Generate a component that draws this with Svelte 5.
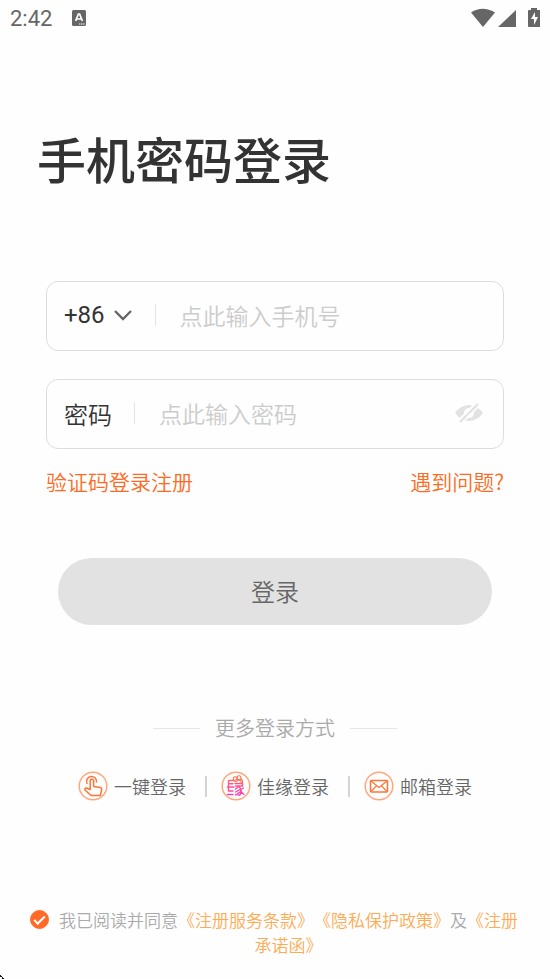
<script>
  let phone = $state('');
  let password = $state('');
  let agreed = $state(true);
</script>

<div class="screen">
  <header class="status">
    <span class="time">2:42</span>
    <svg class="app" width="14" height="16" viewBox="0 0 14 16" aria-hidden="true">
      <rect width="14" height="16" rx="1.5" fill="#666" />
      <path d="M3.600 11 6.400 4h1.200l2.800 7M5 9h4" fill="none" stroke="#fff" stroke-width="1.700" />
      <path d="M7 14h6" stroke="#fff" stroke-width="1" stroke-dasharray="1.4 .7" />
    </svg>
    <svg class="signals" width="70" height="20" viewBox="0 0 70 20" aria-hidden="true">
      <path d="M1 4.5Q12.5-3 25 4.5L13 19Z" fill="#666" />
      <path d="M46 2v17H28Z" fill="#666" />
      <path d="M61 0h6v2h3v17H59q-1 0-1-1V3q0-1 1-1h2Z" fill="#666" />
      <path d="M65 4l-4 7h3v6l4-8h-3Z" fill="#fff" />
    </svg>
  </header>

  <main>
    <h1>手机密码登录</h1>

    <form onsubmit={(e) => e.preventDefault()}>
      <div class="field">
        <button type="button" class="code" aria-label="+86">
          +86
          <svg width="20" height="12" viewBox="0 0 20 12" aria-hidden="true">
            <path d="M2 2l8 8 8-8" fill="none" stroke="#666" stroke-width="2.4" />
          </svg>
        </button>
        <span class="bar"></span>
        <input type="tel" aria-label="手机号" placeholder="点此输入手机号" bind:value={phone} />
      </div>

      <div class="field">
        <label for="password">密码</label>
        <span class="bar"></span>
        <input id="password" type="password" placeholder="点此输入密码" bind:value={password} />
        <button type="button" class="eye" aria-label="显示密码">
          <svg width="28" height="20" viewBox="0 0 28 20" aria-hidden="true">
            <path d="M0 10Q6 2 14 2t14 8q-6 8-14 8T0 10Z" fill="#e2e2e2" />
            <circle cx="14" cy="10" r="5" fill="#fff" />
            <path d="M14 7a3 3 0 0 1 3 3" fill="none" stroke="#e2e2e2" stroke-width="1.5" />
            <path d="M3 18 21 0" stroke="#fff" stroke-width="2" />
            <path d="M5 19 23 1" stroke="#e2e2e2" stroke-width="2" />
            <path d="M7 20 25 2" stroke="#fff" stroke-width="1.4" />
          </svg>
        </button>
      </div>

      <div class="links">
        <a href="#register">验证码登录注册</a>
        <a href="#help">遇到问题?</a>
      </div>

      <button type="submit" class="submit">登录</button>
    </form>

    <section class="more">
      <h2>更多登录方式</h2>
      <div class="methods">
        <button type="button">
          <svg width="30" height="30" viewBox="0 0 30 30" aria-hidden="true">
            <circle cx="15" cy="15" r="13.8" fill="none" stroke="#ffa77d" stroke-width="1.5" />
            <g fill="none" stroke="#ff7434" stroke-width="1.5" stroke-linejoin="round" stroke-linecap="round">
              <path d="M9 12.500a5 5 0 1 1 9.500-1.500" />
              <path d="M12.200 18.500V10a1.700 1.700 0 0 1 3.400 0v5.500l6.900 1q1.500.5 1.200 2.300L22.300 24.500H13l-6-5.500q-.8-2 1.500-2Z" />
            </g>
          </svg>
          一键登录
        </button>
        <span class="rule"></span>
        <button type="button">
          <svg width="30" height="30" viewBox="0 0 30 30" aria-hidden="true">
            <defs>
              <linearGradient id="knot" gradientUnits="userSpaceOnUse" x1="0" y1="5" x2="0" y2="24">
                <stop offset="0" stop-color="#ff7a45" />
                <stop offset=".35" stop-color="#fb5a83" />
                <stop offset="1" stop-color="#f83fb4" />
              </linearGradient>
            </defs>
            <circle cx="15" cy="15" r="13.8" fill="none" stroke="#ffa77d" stroke-width="1.5" />
            <g fill="none" stroke="url(#knot)" stroke-width="1.4" stroke-linecap="round" stroke-linejoin="round">
              <path d="M12.500 9.500H7.500v6.500M7.500 12.700h4.500M6.500 16h6.500M7.500 16.500v3.500h4.500M6.500 23.500h5.500" />
              <path d="M14 12.500h7.500V15H14.500M14.500 18l3.500-2.500q3.500 4 1 8.500h-2M14.500 21l4.500-2.500M14.500 24l4.500-3M20 18.500l2.500-1.500M19.500 19q1 3 3.500 4.500" />
            </g>
            <g fill="none" stroke="#ff6f4d" stroke-width="1.100">
              <circle cx="14" cy="7.500" r="1.800" />
              <circle cx="18" cy="6.800" r="2" />
              <path d="M13 9.500q2 2 4-.5 2.500-.5 3.500 2.500M20 8q2 1 1.500 4" />
            </g>
          </svg>
          佳缘登录
        </button>
        <span class="rule"></span>
        <button type="button">
          <svg width="30" height="30" viewBox="0 0 30 30" aria-hidden="true">
            <circle cx="15" cy="15" r="13.8" fill="none" stroke="#ffa77d" stroke-width="1.5" />
            <g fill="none" stroke="#ff7434" stroke-width="1.5" stroke-linejoin="round">
              <rect x="6.500" y="9.500" width="17" height="11.500" rx="1" />
              <path d="M7 10l8 6.500L23 10M7 20.500l5.500-5.700M23 20.500l-5.500-5.700" stroke-width="1.2" />
            </g>
          </svg>
          邮箱登录
        </button>
      </div>
    </section>
  </main>

  <footer>
    <input id="agree" type="checkbox" bind:checked={agreed} />
    <p>
      <label for="agree">我已阅读并同意</label><a href="#terms">《注册服务条款》</a><a href="#privacy">《隐私保护政策》</a>及<a href="#promise">《注册承诺函》</a>
    </p>
  </footer>

  <svg class="corner" width="4" height="4" viewBox="0 0 4 4" aria-hidden="true">
    <path d="M0 0h1v1h1v1H0ZM2 2h1v1h1v1H2Z" fill="#111" />
  </svg>
</div>

<style>
  :global(body) { background: #fefefe; }
  .screen {
    position: relative;
    box-sizing: border-box;
    min-height: 100vh;
    display: flex;
    flex-direction: column;
    color: #333;
    font-family: "Noto Sans CJK SC", sans-serif;
    font-weight: 350;
    text-spacing-trim: space-all;
  }
  button, input {
    font: inherit;
    color: inherit;
    background: none;
    border: 0;
    margin: 0;
    padding: 0;
  }
  button { cursor: pointer; }
  a { text-decoration: none; }
  svg { display: block; flex: none; }
  .status {
    display: flex;
    align-items: center;
    height: 36px;
    padding: 0 10px;
  }
  .time {
    padding-top: 2px;
    font: 400 22px/36px Roboto, sans-serif;
    color: #666;
  }
  .app { margin-left: 20px; }
  .signals { margin-left: auto; }
  h1 {
    margin: 86px 37px 0;
    font-size: 49px;
    font-weight: 500;
    line-height: 72px;
  }
  form { margin: 87px 46px 0; }
  .field {
    display: flex;
    align-items: center;
    box-sizing: border-box;
    height: 70px;
    margin-bottom: 28px;
    padding: 0 20px 2px 17px;
    border: 1px solid #ddd;
    border-radius: 12px;
    font-size: 24px;
  }
  .code {
    display: flex;
    align-items: center;
    gap: 8px;
    font-family: Roboto, sans-serif;
    font-weight: 400;
  }
  .bar {
    flex: none;
    width: 1px;
    height: 22px;
    margin: 0 24px 0 22px;
    background: #e4e4e4;
  }
  .field input {
    flex: 1;
    min-width: 0;
    height: 60px;
    font-size: 23px;
    outline: 0;
  }
  .field input::placeholder { color: #ccc; opacity: 1; }
  .links {
    display: flex;
    justify-content: space-between;
    margin-top: -12px;
    font-size: 21px;
    line-height: 32px;
  }
  .links a { color: #ff6a22; }
  .submit {
    display: block;
    width: calc(100% - 24px);
    height: 67px;
    margin: 61px 12px 0;
    padding-bottom: 2px;
    border-radius: 34px;
    background: #e2e2e2;
    color: #666;
    font-size: 24px;
  }
  .more { margin-top: 88px; }
  h2 {
    display: flex;
    align-items: center;
    justify-content: center;
    gap: 15px;
    margin: 0;
    font-size: 20px;
    font-weight: inherit;
    line-height: 30px;
    color: #aaa;
  }
  h2::before, h2::after {
    content: "";
    width: 47px;
    height: 1px;
    background: #e6e6e6;
  }
  .methods {
    display: flex;
    align-items: center;
    justify-content: center;
    margin-top: 28px;
  }
  .methods button {
    display: flex;
    align-items: center;
    gap: 6px;
    font-size: 18px;
    line-height: 28px;
    color: #666;
  }
  .rule {
    width: 2px;
    height: 21px;
    margin: 0 14px 0 19px;
    background: #d4d4d4;
  }
  footer {
    display: flex;
    align-items: flex-start;
    gap: 8px;
    margin-top: auto;
    padding: 0 30px 22px;
    color: #aaa;
    font-size: 17px;
    line-height: 25px;
  }
  footer p { flex: 1; margin: 0; text-align: center; }
  footer a { color: #ffab54; }
  footer input {
    appearance: none;
    flex: none;
    width: 19px;
    height: 19px;
    margin-top: 3px;
    border: 1px solid #ff6a26;
    border-radius: 50%;
    display: grid;
    place-items: center;
  }
  footer input:checked { background: #ff6a26; }
  footer input:checked::after {
    content: "";
    width: 9px;
    height: 4px;
    border: solid #fff;
    border-width: 0 0 2px 2px;
    transform: translateY(-1px) rotate(-45deg);
  }
  .corner {
    position: absolute;
    left: 0;
    bottom: 0;
  }
</style>
